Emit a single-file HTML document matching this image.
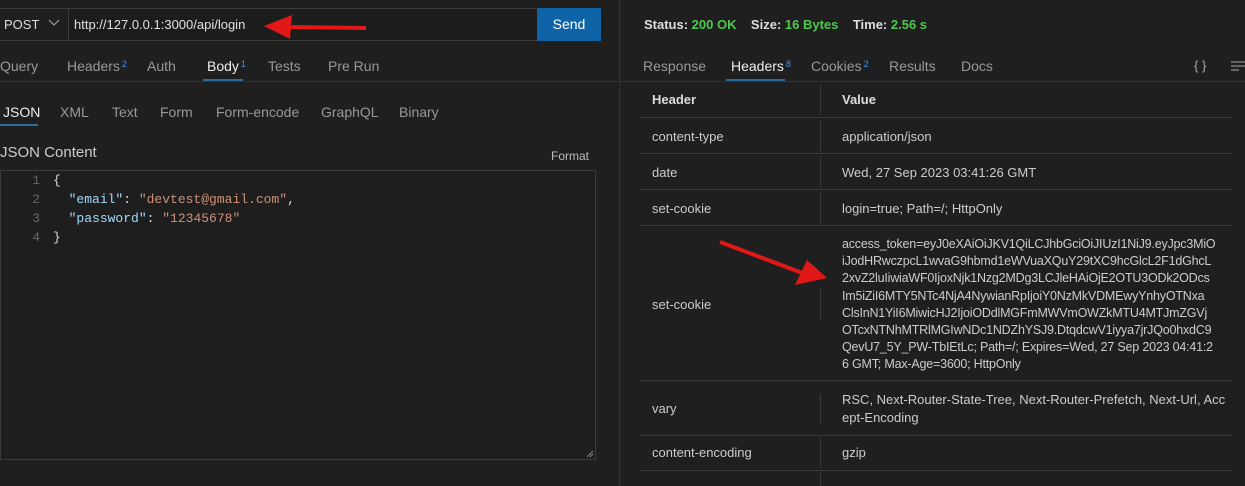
<!DOCTYPE html>
<html><head><style>
*{box-sizing:border-box;margin:0;padding:0}
body{width:1245px;height:486px;background:#1f1f1f;font-family:"Liberation Sans",sans-serif;font-size:13px;color:#ccc;position:relative;overflow:hidden}
.a{position:absolute;white-space:nowrap}
sup{font-size:9px;color:#3794ff;vertical-align:4px;margin-left:2px}
.g{color:#4ec94e}
.mono{font-family:"Liberation Mono",monospace;font-size:13px}
.hl{position:absolute;left:640px;width:592px;height:1px;background:#3a3a3a}
.vl{position:absolute;left:820px;width:1px;background:#3a3a3a}
</style></head><body>
<div class="a" style="left:-1px;top:8px;width:69px;height:33px;border:1px solid #3c3c3c;border-right:none"></div>
<div class="a" style="left:4px;top:17px;font-size:13px;color:#ddd">POST</div>
<svg class="a" style="left:48px;top:19px" width="12" height="8"><path d="M1 1l5 5 5-5" stroke="#aaa" fill="none"/></svg>
<div class="a" style="left:68px;top:8px;width:470px;height:33px;border:1px solid #3c3c3c;background:#1c1c1c"></div>
<div class="a" style="left:74px;top:17px;color:#e0e0e0">http://127.0.0.1:3000/api/login</div>
<div class="a" style="left:537px;top:8px;width:64px;height:33px;background:#0e64a6;color:#fff;font-size:14px;text-align:center;line-height:32px">Send</div>
<svg class="a" style="left:260px;top:12px" width="110" height="30"><path d="M106 16 L28 15" stroke="#e01818" stroke-width="4"/><path d="M4 14 L32 3 L30 27 Z" fill="#e01818"/></svg>
<div class="a" style="left:0;top:58px;color:#999;font-size:14px">Query</div>
<div class="a" style="left:67px;top:58px;color:#999;font-size:14px">Headers<sup>2</sup></div>
<div class="a" style="left:147px;top:58px;color:#999;font-size:14px">Auth</div>
<div class="a" style="left:207px;top:58px;color:#eee;font-size:14px">Body<sup>1</sup></div>
<div class="a" style="left:268px;top:58px;color:#999;font-size:14px">Tests</div>
<div class="a" style="left:328px;top:58px;color:#999;font-size:14px">Pre Run</div>
<div class="a" style="left:0;top:81px;width:618px;height:1px;background:#333"></div>
<div class="a" style="left:203px;top:79px;width:40px;height:2px;background:#2a6d9c"></div>
<div class="a" style="left:3px;top:104px;color:#eee;font-size:14px">JSON</div>
<div class="a" style="left:60px;top:104px;color:#999;font-size:14px">XML</div>
<div class="a" style="left:112px;top:104px;color:#999;font-size:14px">Text</div>
<div class="a" style="left:160px;top:104px;color:#999;font-size:14px">Form</div>
<div class="a" style="left:216px;top:104px;color:#999;font-size:14px">Form-encode</div>
<div class="a" style="left:321px;top:104px;color:#999;font-size:14px">GraphQL</div>
<div class="a" style="left:399px;top:104px;color:#999;font-size:14px">Binary</div>
<div class="a" style="left:0;top:124px;width:38px;height:2px;background:#2a6d9c"></div>
<div class="a" style="left:0;top:144px;color:#ccc;font-size:15px">JSON Content</div>
<div class="a" style="left:551px;top:149px;color:#bbb;font-size:12px">Format</div>
<div class="a" style="left:0;top:170px;width:596px;height:290px;border:1px solid #3c3c3c;background:#1e1e1e"></div>
<svg class="a" style="left:586px;top:450px" width="8" height="8"><path d="M1 7L7 1M4 7L7 4" stroke="#888"/></svg>
<div class="a mono" style="left:20px;top:171px;width:20px;text-align:right;color:#666;line-height:19px">1<br>2<br>3<br>4</div>
<div class="a mono" style="left:53px;top:171px;line-height:19px;color:#ddd">{<br>&nbsp;&nbsp;<span style="color:#9cdcfe">"email"</span>: <span style="color:#ce9178">"devtest@gmail.com"</span>,<br>&nbsp;&nbsp;<span style="color:#9cdcfe">"password"</span>: <span style="color:#ce9178">"12345678"</span><br>}</div>
<div class="a" style="left:619px;top:0;width:1px;height:486px;background:#333"></div>
<div class="a" style="left:644px;top:17px;color:#ddd;font-weight:bold;font-size:13px">Status: <span class="g">200 OK</span>&nbsp;&nbsp;&nbsp;&nbsp;Size: <span class="g">16 Bytes</span>&nbsp;&nbsp;&nbsp;&nbsp;Time: <span class="g">2.56 s</span></div>
<div class="a" style="left:643px;top:58px;color:#999;font-size:14px">Response</div>
<div class="a" style="left:731px;top:58px;color:#eee;font-size:14px">Headers<sup>8</sup></div>
<div class="a" style="left:811px;top:58px;color:#999;font-size:14px">Cookies<sup>2</sup></div>
<div class="a" style="left:889px;top:58px;color:#999;font-size:14px">Results</div>
<div class="a" style="left:961px;top:58px;color:#999;font-size:14px">Docs</div>
<div class="a" style="left:1194px;top:58px;color:#aaa;font-size:13px">{ }</div>
<svg class="a" style="left:1229px;top:60px" width="16" height="12"><path d="M2 2h14M2 6h14M2 10h8" stroke="#aaa"/></svg>
<div class="a" style="left:620px;top:81px;width:625px;height:1px;background:#333"></div>
<div class="a" style="left:726px;top:79px;width:59px;height:2px;background:#2a6d9c"></div>
<div class="a" style="left:652px;top:92px;font-weight:bold;color:#ddd">Header</div>
<div class="a" style="left:842px;top:92px;font-weight:bold;color:#ddd">Value</div>
<div class="vl" style="top:84px;height:31px"></div>
<div class="hl" style="top:117px"></div>
<div class="a" style="left:652px;top:129px">content-type</div><div class="a" style="left:842px;top:129px">application/json</div>
<div class="vl" style="top:120px;height:31px"></div>
<div class="hl" style="top:153px"></div>
<div class="a" style="left:652px;top:165px">date</div><div class="a" style="left:842px;top:165px">Wed, 27 Sep 2023 03:41:26 GMT</div>
<div class="vl" style="top:156px;height:32px"></div>
<div class="hl" style="top:189px"></div>
<div class="a" style="left:652px;top:201px">set-cookie</div><div class="a" style="left:842px;top:201px">login=true; Path=/; HttpOnly</div>
<div class="vl" style="top:192px;height:32px"></div>
<div class="hl" style="top:225px"></div>
<div class="a" style="left:652px;top:297px">set-cookie</div>
<div class="vl" style="top:288px;height:32px"></div>
<div class="a" style="left:842px;top:236px;line-height:17.2px;font-size:12.5px;letter-spacing:-0.2px">access_token=eyJ0eXAiOiJKV1QiLCJhbGciOiJIUzI1NiJ9.eyJpc3MiO<br>iJodHRwczpcL1wvaG9hbmd1eWVuaXQuY29tXC9hcGlcL2F1dGhcL<br>2xvZ2luIiwiaWF0IjoxNjk1Nzg2MDg3LCJleHAiOjE2OTU3ODk2ODcs<br>Im5iZiI6MTY5NTc4NjA4NywianRpIjoiY0NzMkVDMEwyYnhyOTNxa<br>ClsInN1YiI6MiwicHJ2IjoiODdlMGFmMWVmOWZkMTU4MTJmZGVj<br>OTcxNTNhMTRlMGIwNDc1NDZhYSJ9.DtqdcwV1iyya7jrJQo0hxdC9<br>QevU7_5Y_PW-TbIEtLc; Path=/; Expires=Wed, 27 Sep 2023 04:41:2<br>6 GMT; Max-Age=3600; HttpOnly</div>
<svg class="a" style="left:715px;top:238px" width="120" height="50"><path d="M5 4 L90 36" stroke="#e01818" stroke-width="4"/><path d="M112 40 L80 47 L92 22 Z" fill="#e01818"/></svg>
<div class="hl" style="top:380px"></div>
<div class="a" style="left:652px;top:401px">vary</div>
<div class="a" style="left:842px;top:391px;line-height:18px">RSC, Next-Router-State-Tree, Next-Router-Prefetch, Next-Url, Acc<br>ept-Encoding</div>
<div class="vl" style="top:394px;height:30px"></div>
<div class="hl" style="top:435px"></div>
<div class="a" style="left:652px;top:445px">content-encoding</div><div class="a" style="left:842px;top:445px">gzip</div>
<div class="vl" style="top:437px;height:31px"></div>
<div class="hl" style="top:470px"></div>
<div class="vl" style="top:473px;height:13px"></div>
</body></html>
